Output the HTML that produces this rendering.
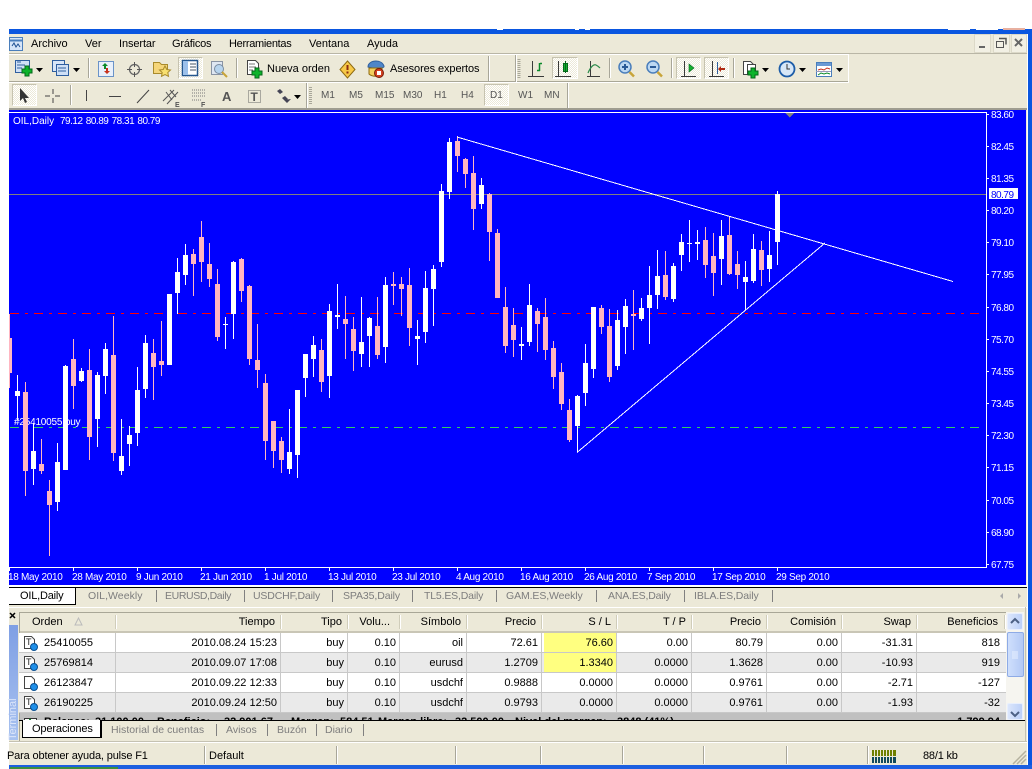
<!DOCTYPE html>
<html lang="es"><head><meta charset="utf-8"><title>MetaTrader</title>
<style>
html,body{margin:0;padding:0;background:#fff}
#p{position:relative;width:1032px;height:769px;overflow:hidden;background:#fff;font:11px "Liberation Sans",sans-serif;color:#000}
.b{position:absolute}
.t{position:absolute;white-space:nowrap;line-height:14px}
.g{color:#7d7d7d;font-size:10.500px}
.m{color:#555}
.s{position:absolute;width:1px;background:#a8a699;border-right:1px solid #fff}
.act{position:absolute;box-sizing:border-box;background:repeating-conic-gradient(#fff 0 25%,#ece9d8 0 50%) 0 0/2px 2px;border:1px solid #c6c3b0;border-right-color:#fff;border-bottom-color:#fff}
table{position:absolute;left:19px;top:633px;border-collapse:separate;border-spacing:0;table-layout:fixed;width:987px;font:11px "Liberation Sans",sans-serif}
td{height:19px;padding:0 3px 0 0;border-right:1px solid #c8c8c8;border-bottom:1px solid #c8c8c8;text-align:right;white-space:nowrap;overflow:hidden;line-height:14px}
td:first-child{text-align:left;padding-left:25px}
td:last-child{padding-right:6px;border-right:0}
tr:nth-child(even) td{background:#eaeaea}
tr:nth-child(odd) td{background:#fff}
td.y{background:#ffff80!important;box-shadow:inset 2px 0 #fff}
tr:nth-child(even) td.y{box-shadow:inset 2px 0 #eaeaea}
svg{position:absolute;overflow:hidden}
</style></head><body><div id="p">

<!-- window frame -->
<div class="b" style="left:9px;top:29px;width:1023px;height:5px;background:#0a56e0"></div>
<div class="b" style="left:1028px;top:29px;width:4px;height:740px;background:#0a56e0"></div>
<div class="b" style="left:497px;top:28px;width:6px;height:2px;background:#fff"></div>
<div class="b" style="left:575px;top:28px;width:4px;height:2px;background:#fff"></div>
<div class="b" style="left:585px;top:28px;width:5px;height:2px;background:#fff"></div>
<div class="b" style="left:948px;top:28px;width:22px;height:2px;background:#fff"></div>
<div class="b" style="left:976px;top:28px;width:22px;height:2px;background:#fff"></div>
<div class="b" style="left:1003px;top:28px;width:22px;height:2px;background:#e8b0a0"></div>
<div class="b" style="left:9px;top:34px;width:1018px;height:731px;background:#ece9d8"></div>
<div class="b" style="left:9px;top:765px;width:1023px;height:4px;background:#1c5fe0"></div>
<div class="b" style="left:10px;top:767px;width:108px;height:2px;background:#3c8f3c"></div>

<!-- menu -->
<span class="t" style="left:31px;top:37px">Archivo</span>
<span class="t" style="left:85px;top:37px">Ver</span>
<span class="t" style="left:119px;top:37px;letter-spacing:-.1px">Insertar</span>
<span class="t" style="left:172px;top:37px;letter-spacing:-.2px">Gráficos</span>
<span class="t" style="left:229px;top:37px;letter-spacing:-.3px">Herramientas</span>
<span class="t" style="left:309px;top:37px">Ventana</span>
<span class="t" style="left:367px;top:37px">Ayuda</span>
<div class="b" style="left:9px;top:53px;width:1018px;height:1px;background:#b9b6a6"></div>
<div class="b" style="left:9px;top:54px;width:840px;height:1px;background:#fff"></div>
<div class="b" style="left:9px;top:81px;width:840px;height:1px;background:#a9a797"></div>
<div class="b" style="left:9px;top:82px;width:840px;height:1px;background:#fff"></div>
<div class="b" style="left:848px;top:55px;width:1px;height:27px;background:#fff"></div>
<div class="b" style="left:9px;top:108px;width:1018px;height:2px;background:#9f9d90"></div>

<!-- toolbar buttons -->
<div class="act" style="left:178px;top:57px;width:25px;height:22px"></div>
<div class="act" style="left:552px;top:57px;width:26px;height:22px"></div>
<div class="act" style="left:676px;top:57px;width:25px;height:22px"></div>
<div class="act" style="left:704px;top:57px;width:25px;height:22px"></div>
<div class="act" style="left:12px;top:84px;width:25px;height:22px"></div>
<div class="act" style="left:484px;top:84px;width:25px;height:22px"></div>

<div class="s" style="left:88px;top:58px;height:20px"></div>
<div class="s" style="left:236px;top:58px;height:20px"></div>
<div class="s" style="left:488px;top:56px;height:25px"></div>
<div class="s" style="left:609px;top:58px;height:20px"></div>
<div class="s" style="left:671px;top:58px;height:20px"></div>
<div class="s" style="left:733px;top:58px;height:20px"></div>
<div class="s" style="left:70px;top:85px;height:20px"></div>
<div class="s" style="left:306px;top:83px;height:25px"></div>
<div class="s" style="left:567px;top:83px;height:25px"></div>
<div class="s" style="left:515px;top:55px;height:27px"></div>

<span class="t" style="left:267px;top:62px">Nueva orden</span>
<span class="t" style="left:390px;top:62px;letter-spacing:-.1px">Asesores expertos</span>
<span class="t m" style="left:321px;top:89px;font-size:10px">M1</span>
<span class="t m" style="left:349px;top:89px;font-size:10px">M5</span>
<span class="t m" style="left:375px;top:89px;font-size:10px">M15</span>
<span class="t m" style="left:403px;top:89px;font-size:10px">M30</span>
<span class="t m" style="left:434px;top:89px;font-size:10px">H1</span>
<span class="t m" style="left:461px;top:89px;font-size:10px">H4</span>
<span class="t m" style="left:490px;top:89px;font-size:10px">D1</span>
<span class="t m" style="left:518px;top:89px;font-size:10px">W1</span>
<span class="t m" style="left:544px;top:89px;font-size:10px">MN</span>

<!-- icons -->
<svg style="left:0;top:30px" width="1032" height="80" viewBox="0 30 1032 80" fill="none">
<defs><path id="pl" d="M-2-5h4v3h3v4h-3v3h-4v-3h-3v-4h3z" fill="#0cb32a" stroke="#05681a"/></defs>
<!-- logo -->
<rect x="9.5" y="37.5" width="13" height="13" fill="#d6e5f8" stroke="#4a7ebb"/><path d="M9.5 40.5h13" stroke="#4a7ebb" stroke-width="2"/><path d="M12 46l2-3 2 4 2-3 2 3" stroke="#1d4f91"/>
<!-- new chart -->
<rect x="15.5" y="60.5" width="14" height="12" fill="#cfe0f6" stroke="#2f5f9f"/><path d="M17 62h4M17 65h8M17 68h5" stroke="#2f5f9f"/><use href="#pl" x="27" y="71"/>
<path d="M36 68h7l-3.5 4zM73 68h7l-3.5 4z" fill="#000"/>
<!-- profiles -->
<rect x="52.5" y="60.5" width="12" height="11" fill="#d8e6f8" stroke="#2f5f9f"/><rect x="56.5" y="64.5" width="12" height="11" fill="#cfe0f6" stroke="#2f5f9f"/><path d="M58 68h8M58 71h8" stroke="#2f5f9f"/>
<!-- market watch -->
<rect x="98.5" y="61.5" width="15" height="15" fill="#e8f0fb" stroke="#6a93c8"/><path d="M105 63l3 3h-2v3h-2v-3h-2z" fill="#0a8a2a"/><path d="M107 74l-3-3h2v-3h2v3h2z" fill="#c8321e"/>
<!-- crosshair -->
<circle cx="134.5" cy="69.5" r="5" stroke="#666" stroke-width="1.3"/><path d="M127 69.5h5M137 69.5h5M134.500 62v5M134.500 72v5" stroke="#555"/>
<!-- favorites -->
<path d="M153.500 62.500h6l2 2h6v9h-14z" fill="#f5d67a" stroke="#a98b2c"/><path d="M165 66l1.800 3.500 3.700.5-2.700 2.500.7 3.800-3.500-1.800-3.500 1.800.7-3.800-2.700-2.500 3.700-.5z" fill="#f8e070" stroke="#a98b2c"/>
<!-- navigator -->
<rect x="182.500" y="60.500" width="15" height="15" fill="#fff" stroke="#24568e" stroke-width="1.500"/><rect x="183" y="61" width="5" height="14" fill="#9cc0ea"/><path d="M190 64h6M190 67h6M190 70h6" stroke="#456"/>
<!-- journal -->
<rect x="211.500" y="61.500" width="11" height="13" fill="#dfe7f2" stroke="#8a94a4"/><circle cx="219" cy="69" r="4.500" fill="#b7d4ee" stroke="#7a8ca0"/><path d="M222 72l5 5" stroke="#c8a43a" stroke-width="2"/>
<!-- new order -->
<path d="M247.500 60.500h8l3 3v11h-11z" fill="#fff" stroke="#444"/><path d="M249 64h6M249 67h7M249 70h4" stroke="#777"/><use href="#pl" x="257" y="73"/>
<!-- alert diamond -->
<path d="M347.500 61l7.500 8.500-7.500 8.500-7.500-8.500z" fill="#f7c948" stroke="#8e6a10"/><path d="M347.500 65v5" stroke="#8a2c10" stroke-width="2"/><path d="M347.500 71.500v2" stroke="#8a2c10" stroke-width="2"/>
<!-- expert -->
<path d="M368 67c0-4 4-6 8-6s7 2 8 5-10 3-16 1z" fill="#4f86c8" stroke="#2f5f9f"/><path d="M369 68h13v6c-2 3-10 3-13 0z" fill="#f3cf5c" stroke="#8e6a10"/><circle cx="379" cy="73" r="4.500" fill="#d2401f" stroke="#7a1c08"/><rect x="377" y="71" width="4" height="4" fill="#fff"/>
<!-- grips -->
<path d="M519 59v19" stroke="#a8a699" stroke-width="3" stroke-dasharray="1 1"/><path d="M310.500 87v18" stroke="#a8a699" stroke-width="3" stroke-dasharray="1 1"/>
<!-- chart types -->
<g stroke="#3a3a3a"><path d="M532.500 61v16M544 76.500h-16M530 76.500"/></g><path d="M539.500 63v8M537 70.500h3M540 63.500h2" stroke="#0a8a2a" stroke-width="1.500"/>
<path d="M558.500 61v16M571 76.500h-16" stroke="#3a3a3a"/><rect x="563.500" y="63.500" width="4" height="8" fill="#14b030" stroke="#05681a"/><path d="M565.500 61v12" stroke="#05681a"/>
<path d="M590.500 61v16M600 76.500h-13" stroke="#3a3a3a"/><path d="M588 73c3-7 6-9 8-8s3 2 4 3" stroke="#2a8a4a" stroke-width="1.200"/>
<!-- zoom -->
<circle cx="625" cy="67" r="6" fill="#bcd8f2" stroke="#4a7ebb" stroke-width="1.500"/><path d="M622 67h6M625 64v6" stroke="#2a5a96" stroke-width="2"/><path d="M629.500 72l4.500 4.500" stroke="#c8a43a" stroke-width="2.500"/>
<circle cx="653" cy="67" r="6" fill="#bcd8f2" stroke="#4a7ebb" stroke-width="1.500"/><path d="M650 67h6" stroke="#2a5a96" stroke-width="2"/><path d="M657.500 72l4.500 4.500" stroke="#c8a43a" stroke-width="2.500"/>
<!-- shift -->
<path d="M684.500 61v16M696 76.500h-15" stroke="#3a3a3a"/><path d="M689 64l5 4-5 4z" fill="#14b030" stroke="#05681a" stroke-width=".6"/>
<path d="M712.500 61v16M724 76.500h-15" stroke="#3a3a3a"/><path d="M717.500 62v12" stroke="#2f5f9f"/><path d="M725 68h-4v-2l-3 3 3 3v-2h4z" fill="#b02a12"/>
<!-- templates -->
<path d="M743.500 61.500h7l3 3v10h-10z" fill="#fff" stroke="#444"/><rect x="747.500" y="64.500" width="8" height="9" fill="#fff" stroke="#444"/><use href="#pl" x="753" y="73"/>
<path d="M762 68h7l-3.500 4zM799 68h7l-3.500 4zM836 68h7l-3.500 4z" fill="#000"/>
<circle cx="787" cy="69" r="7.500" fill="#d7e7f7" stroke="#1d5da8" stroke-width="1.800"/><path d="M787 64v5h3" stroke="#333"/>
<rect x="816.500" y="62.500" width="15" height="14" fill="#fff" stroke="#4a7ebb"/><rect x="817" y="63" width="14" height="3" fill="#6a9ad4"/><path d="M818 70l3-1 3 1 3-2 3 1" stroke="#c8321e"/><path d="M818 75l3-2 3 1 3-1 3 1" stroke="#0a8a2a"/><path d="M816 71.500h15" stroke="#99b"/>
<!-- row 3 -->
<path d="M20 88v13l3-3 2 5 2-1-2-4h4z" fill="#333"/>
<path d="M53 89v5M53 98v5M45 96h5M55 96h5" stroke="#444"/>
<path d="M86.500 90v11M109 96.500h12M137 103l12-13" stroke="#444"/>
<path d="M163 101l11-11M167 104l11-12M166 92l6 8M170 90l6 7" stroke="#555"/><text x="175" y="107" font-size="7" fill="#555" font-family="Liberation Sans" font-weight="bold">E</text>
<path d="M192 90h14M192 93h14M192 96h14M192 100h10" stroke="#777" stroke-dasharray="1 1"/><text x="201" y="107" font-size="7" fill="#555" font-family="Liberation Sans" font-weight="bold">F</text>
<text x="222" y="101" font-size="13" fill="#555" font-family="Liberation Sans" font-weight="bold">A</text>
<rect x="248.500" y="90.500" width="12" height="12" stroke="#666" stroke-dasharray="1 1"/><text x="250.500" y="101" font-size="12" fill="#555" font-family="Liberation Sans" font-weight="bold">T</text>
<path d="M277 91l3-2 3 3-3 2zM282 98l3-2 3 3-3 2zM284 100l7-1-4 4z" fill="#445"/><path d="M294 95h7l-3.500 4z" fill="#000"/>
<!-- window controls -->
<rect x="974.500" y="34.500" width="16" height="18" fill="#f2f0e4" stroke="#dcd9c8"/><rect x="993.500" y="34.500" width="16" height="18" fill="#f2f0e4" stroke="#dcd9c8"/><rect x="1011.500" y="34.500" width="15" height="18" fill="#f2f0e4" stroke="#dcd9c8"/>
<path d="M979 47h6" stroke="#666" stroke-width="2"/><rect x="996.500" y="41.500" width="7" height="6" stroke="#555"/><path d="M999 38.500h7v6" stroke="#555" stroke-width="1.500"/><path d="M1015 39l7 7M1022 39l-7 7" stroke="#666" stroke-width="2"/>
</svg>

<!-- chart -->
<svg style="left:9px;top:110px" width="1017" height="475" viewBox="9 110 1017 475" font-family="Liberation Sans" font-size="10" fill="#fff" shape-rendering="crispEdges">
<rect x="9" y="110" width="1017" height="475" fill="#00f"/>
<path d="M9 112.500H986.500V567.500H9" fill="none" stroke="#fff"/>
<path d="M785 113h9l-4.500 4.500z" fill="#808080"/>
<path d="M9 194.500H986" stroke="#808080"/>
<path d="M10 313.500H980" stroke="#f00" stroke-dasharray="9 6 3 6"/>
<path d="M10 427.500H980" stroke="#32cd62" stroke-dasharray="9 6 3 6"/>
<text x="13" y="124">OIL,Daily</text><text x="60" y="124" letter-spacing="-.5" word-spacing="1">79.12 80.89 78.31 80.79</text>
<text x="14" y="425" letter-spacing="-.2">#25410055 buy</text>

<path stroke="#ffb6c1" d="M9.500 314V388M25.500 382V496M41.500 439V474M49.500 480V556M73.500 339V409M89.500 349V460M113.500 316V461M153.500 339V400M161.500 321V376M193.500 249V296M201.500 221V282M209.500 243V287M217.500 269V341M241.500 258V302M249.500 285V365M257.500 324V388M265.500 374V460M273.500 421V468M281.500 437V473M321.500 339V392M345.500 296V359M353.500 317V371M377.500 297V359M393.500 272V305M401.500 277V316M409.500 268V346M457.500 136V172M465.500 158V188M473.500 156V230M489.500 193V261M497.500 229V298M505.500 287V353M513.500 308V357M537.500 308V352M545.500 298V360M553.500 341V389M561.500 363V410M569.500 399V442M601.500 305V334M609.500 309V382M633.500 290V350M665.500 251V300M705.500 227V278M713.500 233V296M729.500 216V275M737.500 251V289M761.500 241V286"/>
<path stroke="#ffb6c1" stroke-width="5" d="M9.500 338V373M25.500 392V471M41.500 464V471M49.500 491V505M73.500 359V386M89.500 370V437M113.500 355V453M153.500 353V367M161.500 361V365M193.500 254V264M201.500 237V262M209.500 264V279M217.500 284V337M241.500 259V291M249.500 286V359M257.500 360V370M265.500 383V441M273.500 421V451M281.500 441V460M321.500 350V382M345.500 319V324M353.500 329V351M377.500 326V355M393.500 284V286M401.500 284V289M409.500 285V328M457.500 141V156M465.500 159V174M473.500 173V209M489.500 194V232M497.500 233V298M505.500 307V346M513.500 325V340M537.500 311V324M545.500 317V350M553.500 348V377M561.500 372V404M569.500 410V440M601.500 308V327M609.500 326V377M633.500 314V316M665.500 275V297M705.500 240V265M713.500 256V273M729.500 235V274M737.500 264V275M761.500 250V270"/>
<path stroke="#fff" d="M17.500 375V420M33.500 423V485M57.500 443V511M65.500 365V470M81.500 368V382M97.500 372V447M105.500 343V394M121.500 419V475M129.500 426V466M137.500 367V446M145.500 335V398M169.500 294V365M177.500 258V314M185.500 244V285M225.500 317V349M233.500 261V339M289.500 409V474M297.500 390V478M305.500 354V397M313.500 336V377M329.500 304V398M337.500 284V329M361.500 297V367M369.500 317V367M385.500 277V363M417.500 320V365M425.500 271V343M433.500 265V326M441.500 184V267M449.500 138V199M481.500 178V209M521.500 327V360M529.500 284V346M577.500 395V452M585.500 344V406M593.500 307V378M617.500 310V370M625.500 299V354M641.500 298V321M649.500 266V344M657.500 250V309M673.500 263V302M681.500 234V271M689.500 220V262M697.500 230V260M721.500 220V285M745.500 261V310M753.500 234V283M769.500 231V282M777.500 191V265"/>
<path stroke="#fff" stroke-width="5" d="M17.500 391V396M33.500 451V469M57.500 462V502M65.500 366V470M81.500 371V381M97.500 375V419M105.500 349V376M121.500 456V471M129.500 435V444M137.500 390V433M145.500 343V389M169.500 294V365M177.500 272V293M185.500 255V275M225.500 324V325M233.500 262V314M289.500 452V469M297.500 390V455M305.500 354V378M313.500 345V359M329.500 311V376M337.500 315V317M361.500 342V354M369.500 318V336M385.500 285V347M417.500 336V339M425.500 288V332M433.500 269V289M441.500 191V262M449.500 142V192M481.500 185V204M521.500 344V346M529.500 305V342M577.500 396V426M585.500 363V393M593.500 307V369M617.500 320V366M625.500 306V327M641.500 308V319M649.500 295V308M657.500 276V295M673.500 266V299M681.500 242V255M689.500 243V244M697.500 242V244M721.500 236V259M745.500 277V282M753.500 249V281M769.500 255V269M777.500 194V242"/>

<path d="M457 137L953 281.500M577 452.500L825 243" stroke="#fff" fill="none"/>

<!-- axis ticks -->
<path stroke="#fff" d="M986 114.500h3M986 146.500h3M986 178.500h3M986 210.500h3M986 242.500h3M986 274.500h3M986 307.500h3M986 339.500h3M986 371.500h3M986 403.500h3M986 435.500h3M986 467.500h3M986 500.500h3M986 532.500h3M986 564.500h3"/>
<path stroke="#fff" d="M9.500 567v4M73.500 567v4M137.500 567v4M201.500 567v4M265.500 567v4M329.500 567v4M393.500 567v4M457.500 567v4M521.500 567v4M585.500 567v4M649.500 567v4M713.500 567v4M777.500 567v4"/>
<g letter-spacing="-.5" shape-rendering="auto">
<text x="991" y="118">83.60</text><text x="991" y="150">82.45</text><text x="991" y="182">81.35</text><text x="991" y="214">80.20</text><text x="991" y="246">79.10</text><text x="991" y="278">77.95</text><text x="991" y="311">76.80</text><text x="991" y="343">75.70</text><text x="991" y="375">74.55</text><text x="991" y="407">73.45</text><text x="991" y="439">72.30</text><text x="991" y="471">71.15</text><text x="991" y="504">70.05</text><text x="991" y="536">68.90</text><text x="991" y="568">67.75</text>
</g>
<rect x="989" y="188" width="29" height="11" fill="#fff"/>
<text x="991" y="198" fill="#00f" letter-spacing="-.5">80.79</text>
<g letter-spacing="-.3">
<text x="8" y="580">18 May 2010</text><text x="72" y="580">28 May 2010</text><text x="136" y="580">9 Jun 2010</text><text x="200" y="580">21 Jun 2010</text><text x="264" y="580">1 Jul 2010</text><text x="328" y="580">13 Jul 2010</text><text x="392" y="580">23 Jul 2010</text><text x="456" y="580">4 Aug 2010</text><text x="520" y="580">16 Aug 2010</text><text x="584" y="580">26 Aug 2010</text><text x="647" y="580">7 Sep 2010</text><text x="712" y="580">17 Sep 2010</text><text x="776" y="580">29 Sep 2010</text>
</g>
</svg>
<div class="b" style="left:9px;top:585px;width:1018px;height:2px;background:#fff"></div>

<!-- chart tabs -->
<div class="b" style="left:9px;top:587px;width:67px;height:18px;background:#fff;border-top:1px solid #000;border-right:1px solid #000;border-bottom:1px solid #000;box-sizing:border-box"></div>
<div class="b" style="left:76px;top:587px;width:951px;height:1px;background:#000"></div>
<span class="t" style="left:20px;top:589px;letter-spacing:-.2px">OIL,Daily</span>
<span class="t g" style="left:88px;top:589px;letter-spacing:.05px">OIL,Weekly</span>
<span class="t g" style="left:165px;top:589px;letter-spacing:-.38px">EURUSD,Daily</span>
<span class="t g" style="left:253px;top:589px;letter-spacing:-.15px">USDCHF,Daily</span>
<span class="t g" style="left:343px;top:589px;letter-spacing:-.1px">SPA35,Daily</span>
<span class="t g" style="left:424px;top:589px;letter-spacing:-.17px">TL5.ES,Daily</span>
<span class="t g" style="left:506px;top:589px;letter-spacing:-.1px">GAM.ES,Weekly</span>
<span class="t g" style="left:608px;top:589px;letter-spacing:-.17px">ANA.ES,Daily</span>
<span class="t g" style="left:694px;top:589px;letter-spacing:-.1px">IBLA.ES,Daily</span>
<div class="b" style="left:156px;top:590px;width:1px;height:12px;background:#808080"></div>
<div class="b" style="left:244px;top:590px;width:1px;height:12px;background:#808080"></div>
<div class="b" style="left:332px;top:590px;width:1px;height:12px;background:#808080"></div>
<div class="b" style="left:412px;top:590px;width:1px;height:12px;background:#808080"></div>
<div class="b" style="left:496px;top:590px;width:1px;height:12px;background:#808080"></div>
<div class="b" style="left:596px;top:590px;width:1px;height:12px;background:#808080"></div>
<div class="b" style="left:684px;top:590px;width:1px;height:12px;background:#808080"></div>
<div class="b" style="left:772px;top:590px;width:1px;height:12px;background:#808080"></div>
<svg style="left:996px;top:590px" width="28" height="14"><path d="M7 3v6l-3-3zM22 3v6l3-3z" fill="#aaa"/></svg>
<div class="b" style="left:9px;top:607px;width:1018px;height:1px;background:#fff"></div>

<!-- terminal side -->
<svg style="left:9px;top:611px" width="10" height="10"><path d="M1 2l5 5M6 2l-5 5" stroke="#000" stroke-width="1.500"/></svg>
<div class="b" style="left:9px;top:625px;width:9px;height:115px;background:linear-gradient(#7f9fe4,#a8c2f0)"></div>
<span class="t" style="left:-9px;top:711px;width:44px;transform:rotate(-90deg);color:#dce6fa;text-align:left;line-height:14px">Terminal</span>

<!-- header -->
<div class="b" style="left:19px;top:612px;width:987px;height:1px;background:#a9a797"></div>
<div class="b" style="left:19px;top:612px;width:1px;height:129px;background:#a9a797"></div>
<div class="b" style="left:20px;top:631px;width:986px;height:2px;background:#c9c6b6"></div>
<span class="t" style="left:32px;top:615px">Orden</span>
<svg style="left:74px;top:617px" width="10" height="10"><path d="M1 8h7L4.500 1z" fill="none" stroke="#bbb"/></svg>
<span class="t" style="right:757px;top:615px">Tiempo</span>
<span class="t" style="right:690px;top:615px">Tipo</span>
<span class="t" style="right:642px;top:615px">Volu...</span>
<span class="t" style="right:571px;top:615px">Símbolo</span>
<span class="t" style="right:496px;top:615px">Precio</span>
<span class="t" style="right:421px;top:615px">S / L</span>
<span class="t" style="right:346px;top:615px">T / P</span>
<span class="t" style="right:271px;top:615px">Precio</span>
<span class="t" style="right:196px;top:615px">Comisión</span>
<span class="t" style="right:121px;top:615px">Swap</span>
<span class="t" style="right:34px;top:615px">Beneficios</span>
<div class="s" style="left:115px;top:615px;height:14px;background:#d0cdba"></div>
<div class="s" style="left:280px;top:615px;height:14px;background:#d0cdba"></div>
<div class="s" style="left:347px;top:615px;height:14px;background:#d0cdba"></div>
<div class="s" style="left:399px;top:615px;height:14px;background:#d0cdba"></div>
<div class="s" style="left:466px;top:615px;height:14px;background:#d0cdba"></div>
<div class="s" style="left:541px;top:615px;height:14px;background:#d0cdba"></div>
<div class="s" style="left:616px;top:615px;height:14px;background:#d0cdba"></div>
<div class="s" style="left:691px;top:615px;height:14px;background:#d0cdba"></div>
<div class="s" style="left:766px;top:615px;height:14px;background:#d0cdba"></div>
<div class="s" style="left:841px;top:615px;height:14px;background:#d0cdba"></div>
<div class="s" style="left:916px;top:615px;height:14px;background:#d0cdba"></div>
<div class="s" style="left:1004px;top:615px;height:14px;background:#d0cdba"></div>

<!-- table -->
<table>
<colgroup><col style="width:97px"><col style="width:165px"><col style="width:67px"><col style="width:52px"><col style="width:67px"><col style="width:75px"><col style="width:75px"><col style="width:75px"><col style="width:75px"><col style="width:75px"><col style="width:75px"><col style="width:89px"></colgroup>
<tr><td>25410055</td><td>2010.08.24 15:23</td><td>buy</td><td>0.10</td><td>oil</td><td>72.61</td><td class="y">76.60</td><td>0.00</td><td>80.79</td><td>0.00</td><td>-31.31</td><td>818</td></tr>
<tr><td>25769814</td><td>2010.09.07 17:08</td><td>buy</td><td>0.10</td><td>eurusd</td><td>1.2709</td><td class="y">1.3340</td><td>0.0000</td><td>1.3628</td><td>0.00</td><td>-10.93</td><td>919</td></tr>
<tr><td>26123847</td><td>2010.09.22 12:33</td><td>buy</td><td>0.10</td><td>usdchf</td><td>0.9888</td><td>0.0000</td><td>0.0000</td><td>0.9761</td><td>0.00</td><td>-2.71</td><td>-127</td></tr>
<tr><td>26190225</td><td>2010.09.24 12:50</td><td>buy</td><td>0.10</td><td>usdchf</td><td>0.9793</td><td>0.0000</td><td>0.0000</td><td>0.9761</td><td>0.00</td><td>-1.93</td><td>-32</td></tr>
</table>
<svg style="left:22px;top:634px" width="18" height="78" fill="none">
<g id="d1"><path d="M2.500 2.500h7l3 3v9h-10z" fill="#fff" stroke="#444"/><text x="4" y="11" font-family="Liberation Sans" font-size="9" fill="#222">T</text><circle cx="12" cy="13" r="3.500" fill="#1f8fe8" stroke="#0a4f90"/></g>
<g transform="translate(0 20)"><path d="M2.500 2.500h7l3 3v9h-10z" fill="#fff" stroke="#444"/><text x="4" y="11" font-family="Liberation Sans" font-size="9" fill="#222">T</text><circle cx="12" cy="13" r="3.500" fill="#1f8fe8" stroke="#0a4f90"/></g>
<g transform="translate(0 40)"><path d="M2.500 2.500h7l3 3v9h-10z" fill="#fff" stroke="#444"/><circle cx="12" cy="13" r="3.500" fill="#1f8fe8" stroke="#0a4f90"/></g>
<g transform="translate(0 60)"><path d="M2.500 2.500h7l3 3v9h-10z" fill="#fff" stroke="#444"/><text x="4" y="11" font-family="Liberation Sans" font-size="9" fill="#222">T</text><circle cx="12" cy="13" r="3.500" fill="#1f8fe8" stroke="#0a4f90"/></g>
</svg>
<!-- balance row -->
<div class="b" style="left:20px;top:713px;width:986px;height:7px;background:#c0c0c0;overflow:hidden;font-weight:bold">
<div class="b" style="left:4px;top:5px;width:11px;height:4px;background:#fff;border:1px solid #333"></div>
<div class="b" style="left:9px;top:6px;width:2px;height:1px;background:#0a8a2a"></div>
<span class="t" style="left:24px;top:2px">Balance:</span>
<span class="t" style="left:75px;top:2px">31 100.00</span>
<span class="t" style="left:137px;top:2px">Beneficio:</span>
<span class="t" style="left:204px;top:2px">32 901.67</span>
<span class="t" style="left:271px;top:2px">Margen:</span>
<span class="t" style="left:320px;top:2px;font-weight:bold">584.51</span>
<span class="t" style="left:358px;top:2px">Margen libre:</span>
<span class="t" style="left:435px;top:2px">32 500.00</span>
<span class="t" style="left:495px;top:2px">Nivel del margen:</span>
<span class="t" style="left:597px;top:2px">3848 (41%)</span>
<span class="t" style="right:6px;top:2px">1 799.94</span>
</div>
<div class="b" style="left:19px;top:720px;width:1006px;height:1px;background:#000"></div>

<!-- scrollbar -->
<div class="b" style="left:1006px;top:612px;width:18px;height:108px;background:#f6f5f0"></div>
<div class="b" style="left:1007px;top:613px;width:16px;height:17px;background:linear-gradient(90deg,#dbe6fc,#bcd0f8);border:1px solid #e8effd;border-radius:2px;box-sizing:border-box"></div>
<div class="b" style="left:1007px;top:632px;width:17px;height:45px;background:linear-gradient(90deg,#cfdffc,#b3c9f5);border:1px solid #8eabe6;border-radius:2px;box-sizing:border-box"></div>
<div class="b" style="left:1007px;top:703px;width:16px;height:17px;background:linear-gradient(90deg,#dbe6fc,#bcd0f8);border:1px solid #e8effd;border-radius:2px;box-sizing:border-box"></div>
<svg style="left:1006px;top:612px" width="18" height="108" fill="none"><path d="M5 11l4-4 4 4M5 100l4 4 4-4" stroke="#4d6185" stroke-width="2"/><path d="M6 40h6M6 42h6M6 44h6M6 46h6" stroke="#e8f0ff"/></svg>

<!-- terminal tabs -->
<div class="b" style="left:22px;top:720px;width:80px;height:18px;background:#fff;border:1px solid #000;border-top:0;border-right-width:2px;box-sizing:border-box"></div>
<span class="t" style="left:32px;top:722px;letter-spacing:-.15px">Operaciones</span>
<span class="t g" style="left:111px;top:723px;letter-spacing:.05px">Historial de cuentas</span>
<span class="t g" style="left:226px;top:723px">Avisos</span>
<span class="t g" style="left:277px;top:723px">Buzón</span>
<span class="t g" style="left:325px;top:723px">Diario</span>
<div class="b" style="left:216px;top:724px;width:1px;height:12px;background:#808080"></div>
<div class="b" style="left:267px;top:724px;width:1px;height:12px;background:#808080"></div>
<div class="b" style="left:316px;top:724px;width:1px;height:12px;background:#808080"></div>
<div class="b" style="left:363px;top:724px;width:1px;height:12px;background:#808080"></div>
<div class="b" style="left:1025px;top:607px;width:1px;height:135px;background:#c5c2b2"></div>
<div class="b" style="left:9px;top:742px;width:1018px;height:1px;background:#fff"></div>
<div class="b" style="left:9px;top:741px;width:1018px;height:1px;background:#c5c2b2"></div>

<!-- status bar -->
<span class="t" style="left:7px;top:749px;letter-spacing:-.15px">Para obtener ayuda, pulse F1</span>
<span class="t" style="left:209px;top:749px">Default</span>
<div class="s" style="left:204px;top:746px;height:18px"></div>
<div class="s" style="left:336px;top:746px;height:18px"></div>
<div class="s" style="left:455px;top:746px;height:18px"></div>
<div class="s" style="left:540px;top:746px;height:18px"></div>
<div class="s" style="left:622px;top:746px;height:18px"></div>
<div class="s" style="left:703px;top:746px;height:18px"></div>
<div class="s" style="left:786px;top:746px;height:18px"></div>
<div class="s" style="left:867px;top:746px;height:18px"></div>
<svg style="left:872px;top:750px" width="24" height="13"><path d="M0 0h24v6H0z" fill="#6f7f00"/><path d="M0 7h24v6H0z" fill="#124a5c"/><path d="M2.500 0v13M5.500 0v13M8.500 0v13M11.500 0v13M14.500 0v13M17.500 0v13M20.500 0v13" stroke="#ece9d8"/></svg>
<span class="t" style="left:923px;top:749px;letter-spacing:-.2px">88/1 kb</span>
<svg style="left:1012px;top:750px" width="15" height="15"><path d="M14 1L1 14M14 5L5 14M14 9L9 14" stroke="#b5b29f" stroke-width="1.500"/></svg>
</div></body></html>
